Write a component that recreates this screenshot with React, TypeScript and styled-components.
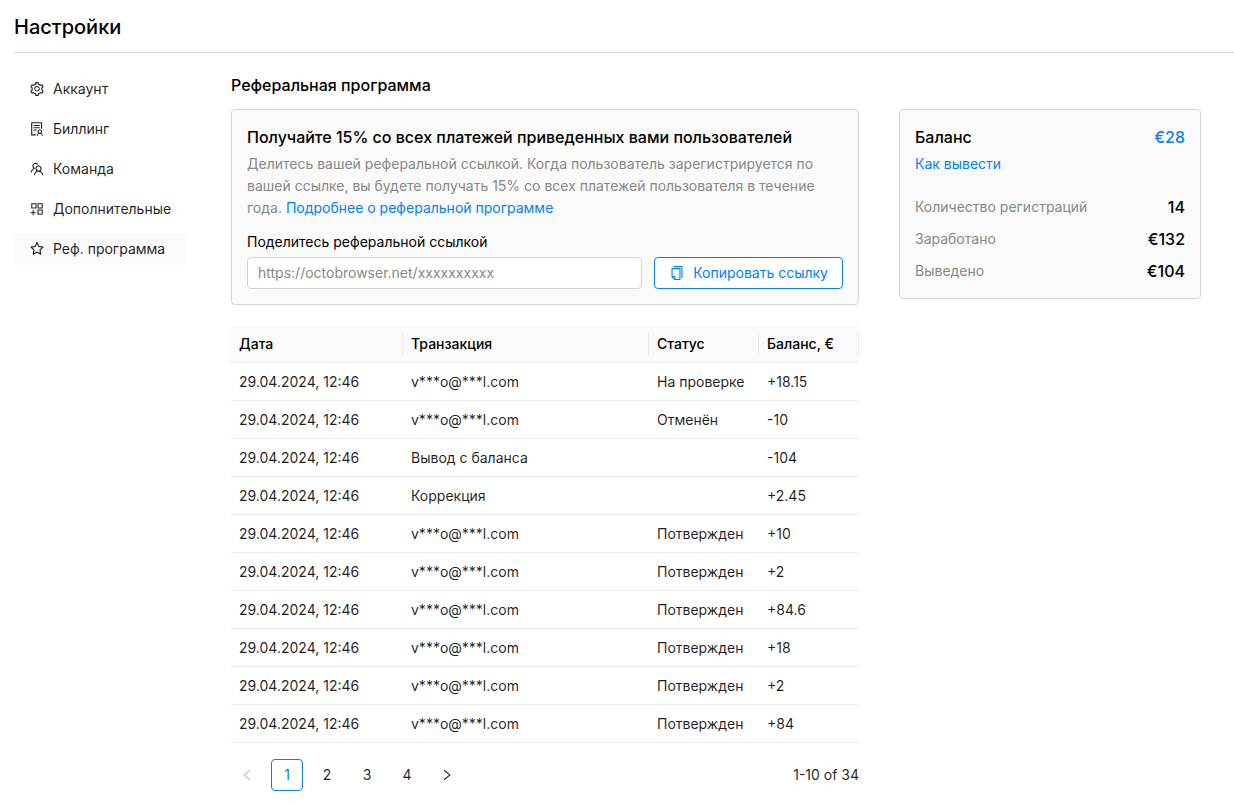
import React from "react";
import styled, { createGlobalStyle } from "styled-components";
import {
  AiOutlineAppstoreAdd,
  AiOutlineCopy,
  AiOutlineLeft,
  AiOutlineRight,
  AiOutlineSetting,
  AiOutlineSolution,
  AiOutlineStar,
  AiOutlineTeam,
} from "react-icons/ai";

const color = {
  text: "#000000",
  body: "rgba(0, 0, 0, 0.88)",
  muted: "#888888",
  primary: "#0080ff",
  border: "#d4d4d4",
  line: "#ececec",
  surface: "#fafafa",
  disabled: "#bfbfbf",
};

const GlobalStyle = createGlobalStyle`
  *, *::before, *::after { box-sizing: border-box; }
  body {
    margin: 0;
    background: #ffffff;
    color: ${color.body};
    font-family: Inter, "Liberation Sans", sans-serif;
    font-size: 14px;
    font-weight: 400;
    line-height: 22px;
  }
  button, input { font: inherit; }
`;

const Page = styled.div`
  padding: 0 0 14px 14px;
`;

const Header = styled.header`
  padding: 12px 0 10px;
  border-bottom: 1px solid ${color.border};
`;

const PageTitle = styled.h1`
  margin: 0;
  font-size: 20px;
  line-height: 30px;
  font-weight: 500;
  color: ${color.text};
`;

const Layout = styled.div`
  display: grid;
  grid-template-columns: 172px minmax(0, 1fr) 302px;
  align-items: start;
  padding: 20px 33px 0 0;
`;

const Menu = styled.nav`
  display: flex;
  flex-direction: column;
  gap: 8px;
`;

const MenuLink = styled.a<{ $active?: boolean }>`
  display: flex;
  align-items: center;
  gap: 8px;
  height: 32px;
  padding: 0 15px;
  border-radius: 4px;
  background: ${(p) => (p.$active ? color.surface : "transparent")};
  color: ${color.body};
  text-decoration: none;
  white-space: nowrap;

  svg {
    flex: none;
    width: 16px;
    height: 16px;
  }
`;

const Content = styled.main`
  padding: 0 40px 0 45px;
`;

const SectionTitle = styled.h2`
  margin: 0 0 12px;
  font-size: 16px;
  line-height: 24px;
  font-weight: 500;
  color: ${color.text};
`;

const Card = styled.section`
  padding: 15px;
  border: 1px solid ${color.border};
  border-radius: 4px;
  background: ${color.surface};
`;

const CardTitle = styled.h3`
  margin: 0;
  font-size: 16px;
  line-height: 24px;
  font-weight: 500;
  color: ${color.text};
`;

const Description = styled.p`
  margin: 4px 0 12px;
  color: ${color.muted};
`;

const Link = styled.a`
  color: ${color.primary};
  text-decoration: none;
`;

const FieldLabel = styled.label`
  display: block;
  margin-bottom: 4px;
  color: ${color.text};
`;

const FieldRow = styled.div`
  display: flex;
  gap: 12px;
`;

const LinkInput = styled.input`
  flex: 1;
  min-width: 0;
  height: 32px;
  padding: 0 10px 2px;
  border: 1px solid ${color.border};
  border-radius: 4px;
  background: #ffffff;
  color: ${color.muted};
`;

const CopyButton = styled.button`
  display: flex;
  align-items: center;
  gap: 8px;
  height: 32px;
  padding: 0 14px;
  border: 1px solid ${color.primary};
  border-radius: 4px;
  background: #ffffff;
  color: ${color.primary};
  white-space: nowrap;
  cursor: pointer;
`;

const Table = styled.table`
  width: 100%;
  margin-top: 20px;
  border-collapse: separate;
  border-spacing: 0;
  table-layout: fixed;
`;

const HeadCell = styled.th<{ $width?: number }>`
  width: ${(p) => (p.$width ? `${p.$width}px` : "auto")};
  height: 38px;
  padding: 0 8px;
  border-bottom: 1px solid ${color.line};
  background: linear-gradient(${color.line}, ${color.line}) right center / 1px 22px
    no-repeat ${color.surface};
  text-align: left;
  font-weight: 500;
  color: ${color.text};
`;

const Cell = styled.td`
  height: 38px;
  padding: 0 8px;
  border-bottom: 1px solid ${color.line};
  white-space: nowrap;
`;

const Footer = styled.div`
  display: flex;
  align-items: center;
  justify-content: space-between;
  margin-top: 16px;
`;

const Pages = styled.nav`
  display: flex;
  gap: 8px;
`;

const PageButton = styled.button<{ $active?: boolean }>`
  display: flex;
  align-items: center;
  justify-content: center;
  width: 32px;
  height: 32px;
  padding: 0;
  border: 1px solid ${(p) => (p.$active ? color.primary : "transparent")};
  border-radius: 4px;
  background: #ffffff;
  color: ${(p) => (p.$active ? color.primary : color.body)};
  cursor: pointer;

  &:disabled {
    color: ${color.disabled};
    cursor: not-allowed;
  }
`;

const BalanceCard = styled(Card)`
  margin-top: 36px;
`;

const BalanceHead = styled.div`
  display: flex;
  justify-content: space-between;
  margin-bottom: 4px;
`;

const BalanceAmount = styled.span`
  font-size: 16px;
  line-height: 24px;
  font-weight: 500;
  color: ${color.primary};
`;

const Stats = styled.dl`
  display: flex;
  flex-direction: column;
  gap: 8px;
  margin: 20px 0 0;
`;

const Stat = styled.div`
  display: flex;
  align-items: center;
  justify-content: space-between;
`;

const StatName = styled.dt`
  color: ${color.muted};
`;

const StatValue = styled.dd`
  margin: 0;
  font-size: 16px;
  line-height: 24px;
  font-weight: 500;
  color: ${color.text};
`;

const menu = [
  { label: "Аккаунт", Icon: AiOutlineSetting },
  { label: "Биллинг", Icon: AiOutlineSolution },
  { label: "Команда", Icon: AiOutlineTeam },
  { label: "Дополнительные", Icon: AiOutlineAppstoreAdd },
  { label: "Реф. программа", Icon: AiOutlineStar, active: true },
];

const date = "29.04.2024, 12:46";
const user = "v***o@***l.com";

const rows = [
  [date, user, "На проверке", "+18.15"],
  [date, user, "Отменён", "-10"],
  [date, "Вывод с баланса", "", "-104"],
  [date, "Коррекция", "", "+2.45"],
  [date, user, "Потвержден", "+10"],
  [date, user, "Потвержден", "+2"],
  [date, user, "Потвержден", "+84.6"],
  [date, user, "Потвержден", "+18"],
  [date, user, "Потвержден", "+2"],
  [date, user, "Потвержден", "+84"],
];

const stats = [
  ["Количество регистраций", "14"],
  ["Заработано", "€132"],
  ["Выведено", "€104"],
];

export default function App() {
  return (
    <Page>
      <GlobalStyle />
      <Header>
        <PageTitle>Настройки</PageTitle>
      </Header>
      <Layout>
        <Menu aria-label="Настройки">
          {menu.map(({ label, Icon, active }) => (
            <MenuLink
              key={label}
              href="#"
              $active={active}
              aria-current={active ? "page" : undefined}
            >
              <Icon />
              {label}
            </MenuLink>
          ))}
        </Menu>

        <Content>
          <SectionTitle>Реферальная программа</SectionTitle>
          <Card>
            <CardTitle>
              Получайте 15% со всех платежей приведенных вами пользователей
            </CardTitle>
            <Description>
              Делитесь вашей реферальной ссылкой. Когда пользователь
              зарегистрируется по вашей ссылке, вы будете получать 15% со всех
              платежей пользователя в течение года.{" "}
              <Link href="#">Подробнее о реферальной программе</Link>
            </Description>
            <FieldLabel htmlFor="ref-link">
              Поделитесь реферальной ссылкой
            </FieldLabel>
            <FieldRow>
              <LinkInput
                id="ref-link"
                type="text"
                readOnly
                value="https://octobrowser.net/xxxxxxxxxx"
              />
              <CopyButton type="button">
                <AiOutlineCopy size={16} />
                Копировать ссылку
              </CopyButton>
            </FieldRow>
          </Card>

          <Table>
            <thead>
              <tr>
                <HeadCell $width={172}>Дата</HeadCell>
                <HeadCell>Транзакция</HeadCell>
                <HeadCell $width={110}>Статус</HeadCell>
                <HeadCell $width={100}>Баланс, €</HeadCell>
              </tr>
            </thead>
            <tbody>
              {rows.map((row, i) => (
                <tr key={i}>
                  {row.map((value, j) => (
                    <Cell key={j}>{value}</Cell>
                  ))}
                </tr>
              ))}
            </tbody>
          </Table>

          <Footer>
            <Pages aria-label="Страницы">
              <PageButton type="button" disabled aria-label="Назад">
                <AiOutlineLeft size={14} />
              </PageButton>
              {[1, 2, 3, 4].map((n) => (
                <PageButton key={n} type="button" $active={n === 1}>
                  {n}
                </PageButton>
              ))}
              <PageButton type="button" aria-label="Вперёд">
                <AiOutlineRight size={14} />
              </PageButton>
            </Pages>
            <span>1-10 of 34</span>
          </Footer>
        </Content>

        <BalanceCard as="aside">
          <BalanceHead>
            <CardTitle>Баланс</CardTitle>
            <BalanceAmount>€28</BalanceAmount>
          </BalanceHead>
          <Link href="#">Как вывести</Link>
          <Stats>
            {stats.map(([name, value]) => (
              <Stat key={name}>
                <StatName>{name}</StatName>
                <StatValue>{value}</StatValue>
              </Stat>
            ))}
          </Stats>
        </BalanceCard>
      </Layout>
    </Page>
  );
}
